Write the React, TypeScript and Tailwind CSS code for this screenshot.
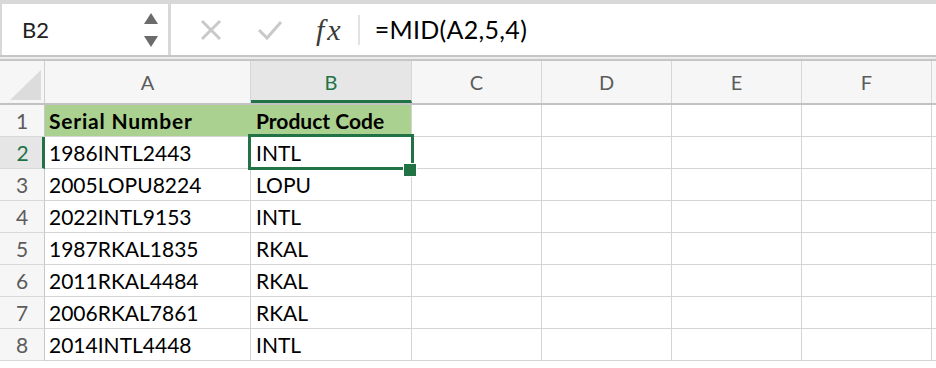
import React from "react";

const COLS = [
  { label: "A", w: "w-[206px]" },
  { label: "B", w: "w-[161px]" },
  { label: "C", w: "w-[130px]" },
  { label: "D", w: "w-[130px]" },
  { label: "E", w: "w-[130px]" },
  { label: "F", w: "w-[130px]" },
];

const ROWS: [string, string][] = [
  ["Serial Number", "Product Code"],
  ["1986INTL2443", "INTL"],
  ["2005LOPU8224", "LOPU"],
  ["2022INTL9153", "INTL"],
  ["1987RKAL1835", "RKAL"],
  ["2011RKAL4484", "RKAL"],
  ["2006RKAL7861", "RKAL"],
  ["2014INTL4448", "INTL"],
];

const font = "font-['Lato','Liberation_Sans',sans-serif]";

export default function App() {
  return (
    <div className={`w-[936px] h-[368px] overflow-hidden bg-white ${font}`}>
      {/* Formula bar */}
      <div className="flex h-[55px] bg-[#d8d8d8] pt-[4px] gap-[3px]">
        <div className="w-[168px] bg-white flex items-center pl-[20px] pr-[10px] border-l-2 border-[#d8d8d8]">
          <span className="text-[22px] text-[#222] flex-1">B2</span>
          <div className="flex flex-col gap-[12px] items-center">
            <SpinUp />
            <SpinDown />
          </div>
        </div>
        <div className="flex-1 bg-white flex items-center">
          <XIcon className="ml-[29px] w-[22px] h-[22px] text-[#c9c9c9]" />
          <CheckIcon className="ml-[35px] w-[26px] h-[22px] text-[#c9c9c9]" />
          <span className="ml-[33px] text-[30px] italic tracking-[3px] text-[#3a3a3a] font-['Liberation_Serif',serif] leading-none">fx</span>
          <div className="ml-[14px] w-[2px] h-[30px] bg-[#e2e2e2]" />
          <span className="ml-[15px] text-[25px] tracking-[0.3px] text-black">=MID(A2,5,4)</span>
        </div>
      </div>
      <div className="h-[6px] border-t-2 border-b-2 border-[#c6c6c6] bg-[#ececec]" />

      {/* Column headers */}
      <div className="flex h-[44px] bg-[#f6f6f6] border-b-2 border-[#c2c2c2]">
        <div className="relative w-[45px] shrink-0 border-r border-[#d0d0d0]">
          <svg className="absolute left-[10px] top-[9px]" width="31" height="30" viewBox="0 0 31 30">
            <polygon points="0,30 31,0 31,30" fill="#dcdcdc" />
          </svg>
        </div>
        {COLS.map((c) => (
          <div
            key={c.label}
            className={`${c.w} shrink-0 flex items-center justify-center text-[20px] border-r border-[#d6d6d6] ${
              c.label === "B"
                ? "bg-[#e6e6e6] text-[#217346] border-b-[3px] border-b-[#217346] pt-[3px]"
                : "text-[#5c5c5c]"
            }`}
          >
            {c.label}
          </div>
        ))}
        <div className="flex-1" />
      </div>

      {/* Grid */}
      {ROWS.map(([a, b], i) => {
        const n = i + 1;
        const header = n === 1;
        const sel = n === 2;
        return (
          <div key={n} className="flex h-[32px]">
            <div
              className={`w-[45px] shrink-0 flex items-center justify-center text-[21px] border-b border-[#d8d8d8] ${
                sel
                  ? "bg-[#e6e6e6] text-[#217346] border-r-[3px] border-r-[#217346] pl-[3px]"
                  : "bg-[#f6f6f6] text-[#5c5c5c] border-r border-r-[#c8c8c8]"
              }`}
            >
              {n}
            </div>
            <div
              className={`w-[206px] shrink-0 flex items-center pl-[4px] text-[21px] text-black border-r border-b border-[#d4d4d4] ${
                header ? "bg-[#aad18f] font-bold tracking-[0.8px] border-r-[#aad18f]" : ""
              }`}
            >
              {a}
            </div>
            <div
              className={`relative w-[161px] shrink-0 flex items-center pl-[5px] text-[21px] text-black border-r border-b border-[#d4d4d4] ${
                header ? "bg-[#aad18f] font-bold" : ""
              }`}
            >
              {b}
              {sel && (
                <div className="absolute inset-0 z-10">
                  <div className="absolute -left-[3px] -top-[3px] -right-[3px] -bottom-[2px] border-[3px] border-[#217346]" />
                  <div className="absolute -right-[5px] -bottom-[8px] w-[12px] h-[12px] bg-[#217346] ring-1 ring-white" />
                </div>
              )}
            </div>
            {[0, 1, 2, 3].map((k) => (
              <div key={k} className="w-[130px] shrink-0 border-r border-b border-[#d4d4d4]" />
            ))}
            <div className="flex-1 border-b border-[#d4d4d4]" />
          </div>
        );
      })}
    </div>
  );
}

function SpinUp() {
  return (
    <svg width="14" height="11" viewBox="0 0 14 11">
      <polygon points="7,0 14,11 0,11" fill="#6b6b6b" />
    </svg>
  );
}

function SpinDown() {
  return (
    <svg width="14" height="11" viewBox="0 0 14 11">
      <polygon points="0,0 14,0 7,11" fill="#6b6b6b" />
    </svg>
  );
}

function XIcon({ className }: { className?: string }) {
  return (
    <svg className={className} viewBox="0 0 22 22" fill="none" stroke="currentColor" strokeWidth="3">
      <line x1="2" y1="2" x2="20" y2="20" />
      <line x1="20" y1="2" x2="2" y2="20" />
    </svg>
  );
}

function CheckIcon({ className }: { className?: string }) {
  return (
    <svg className={className} viewBox="0 0 26 22" fill="none" stroke="currentColor" strokeWidth="3">
      <polyline points="2,11 10,19 24,3" />
    </svg>
  );
}
